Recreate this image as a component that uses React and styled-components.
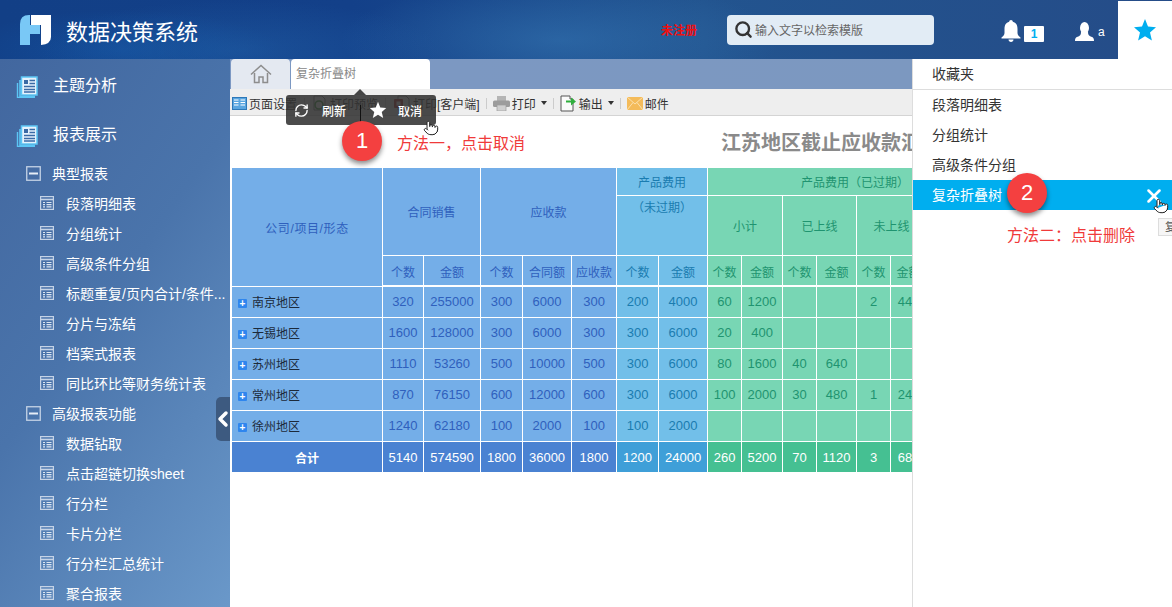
import React from 'react';
import styled, { createGlobalStyle } from 'styled-components';
import { ChevronLeft, Pointer, RefreshCw, Search, X } from 'lucide-react';

const FONT = `"Liberation Sans", "Noto Sans CJK SC", sans-serif`;

const GlobalStyle = createGlobalStyle`
  html, body { margin: 0; padding: 0; height: 100%; overflow: hidden; }
  body { font-family: ${FONT}; background: #fff; }
  #root { height: 100%; }
`;

const Page = styled.div`
  position: relative;
  width: 1172px;
  height: 607px;
  overflow: hidden;
  display: flex;
  flex-direction: column;
`;

const Header = styled.header`
  height: 59px;
  flex: none;
  display: flex;
  align-items: center;
  padding-left: 20px;
  background:
    radial-gradient(ellipse 220px 60px at 560px 40px, rgba(60, 130, 190, .45), transparent),
    radial-gradient(ellipse 200px 50px at 240px 50px, rgba(40, 110, 180, .35), transparent),
    radial-gradient(ellipse 160px 40px at 120px 50px, rgba(20, 90, 170, .5), transparent),
    linear-gradient(90deg, #123f86 0%, #134089 30%, #22548f 60%, #254c88 100%);
`;

const AppTitle = styled.div`
  margin-left: 15px;
  font-size: 22px;
  color: #fff;
  white-space: nowrap;
`;

const Unregistered = styled.div`
  margin-left: 463px;
  width: 66px;
  font-size: 12px;
  font-weight: 700;
  color: #f01010;
`;

const SearchBox = styled.div`
  width: 207px;
  height: 30px;
  box-sizing: border-box;
  padding-left: 7px;
  display: flex;
  align-items: center;
  gap: 2px;
  border-radius: 4px;
  background: #e2ecf5;
  font-size: 12px;
  color: #666;
  svg { color: #333; flex: none; }
`;

const BellWrap = styled.div`
  margin-left: 67px;
  margin-top: 3px;
  display: flex;
  align-items: flex-end;
  gap: 3px;
`;

const BellBadge = styled.span`
  width: 20px;
  height: 16px;
  background: #fff;
  color: #00aeef;
  border-radius: 1px;
  font-size: 12px;
  font-weight: 700;
  line-height: 16px;
  text-align: center;
`;

const UserWrap = styled.div`
  margin-left: 31px;
  margin-top: 3px;
  display: flex;
  align-items: flex-end;
  gap: 4px;
  color: #fff;
  font-size: 12px;
  line-height: 16px;
  span { margin-bottom: 1px; }
`;

const StarTab = styled.div`
  margin-left: auto;
  width: 54px;
  height: 58px;
  align-self: flex-end;
  background: #fff;
  display: flex;
  align-items: center;
  justify-content: center;
`;

const Body = styled.div`
  flex: 1;
  min-height: 0;
  display: flex;
`;

const Sidebar = styled.nav`
  position: relative;
  width: 230px;
  flex: none;
  box-sizing: border-box;
  padding-top: 1px;
  color: #fff;
  background: linear-gradient(125deg, #42679f 0%, #4a74ab 45%, #6a98c9 100%);
`;

const TopItem = styled.div`
  height: 49px;
  display: flex;
  align-items: center;
  padding-left: 16px;
  gap: 15px;
  font-size: 16px;
  svg { flex: none; margin-top: 4px; }
  span { margin-top: -2px; }
`;

const GroupRow = styled.div`
  height: 30px;
  display: flex;
  align-items: center;
  padding-left: 26px;
  gap: 11px;
  font-size: 14px;
`;

const LeafRow = styled.div`
  height: 30px;
  display: flex;
  align-items: center;
  padding-left: 40px;
  gap: 12px;
  font-size: 14px;
  white-space: nowrap;
  svg { flex: none; }
`;

const CollapseHandle = styled.div`
  position: absolute;
  right: 0;
  top: 338px;
  width: 14px;
  height: 44px;
  border-radius: 5px 0 0 5px;
  background: #3d5a80;
  color: #fff;
  display: flex;
  align-items: center;
  justify-content: center;
  svg { flex: none; }
`;

const Main = styled.main`
  width: 682px;
  flex: none;
  display: flex;
  flex-direction: column;
  overflow: hidden;
  background: #fff;
`;

const TabStrip = styled.div`
  height: 30px;
  flex: none;
  display: flex;
  align-items: stretch;
  gap: 1px;
  padding-left: 1px;
  background: linear-gradient(90deg, #7c98c3, #7c98c0);
`;

const HomeTab = styled.div`
  width: 59px;
  background: #e4e9f1;
  border-radius: 4px 4px 0 0;
  display: flex;
  align-items: center;
  justify-content: center;
`;

const ActiveTab = styled.div`
  width: 139px;
  box-sizing: border-box;
  padding: 0 5px;
  background: #fff;
  border-radius: 4px 4px 0 0;
  font-size: 12px;
  line-height: 30px;
  color: #888;
`;

const Toolbar = styled.div`
  height: 27px;
  flex: none;
  box-sizing: border-box;
  display: flex;
  align-items: center;
  padding: 2px 0 0 2px;
  background: #eeeeee;
  border-bottom: 1px solid #d4d4d4;
  font-size: 12px;
  color: #333;
  white-space: nowrap;
`;

const ToolItem = styled.div`
  display: flex;
  align-items: center;
  gap: 2px;
  svg { flex: none; }
`;

const ToolSep = styled.i`
  width: 1px;
  height: 11px;
  margin: 0 ${p => p.$gap || 7}px;
  background: #ccc;
`;

const Caret = styled.i`
  width: 0;
  height: 0;
  margin-left: 3px;
  border: 3px solid transparent;
  border-top: 4px solid #333;
  border-bottom: 0;
`;

const ReportTitle = styled.div`
  height: 52px;
  flex: none;
  box-sizing: border-box;
  padding: 14px 0 0 491px;
  font-size: 20px;
  line-height: 26px;
  font-weight: 700;
  color: #8a8a8a;
  white-space: nowrap;
`;

const TableClip = styled.div`
  margin-left: 2px;
  overflow: hidden;
`;

const Report = styled.table`
  table-layout: fixed;
  width: 695px;
  border-collapse: separate;
  border-spacing: 0;
  font-size: 12px;
`;

const palette = {
  blue: { bg: '#74aee8', fg: '#2f60bd', total: '#4a82d2' },
  sky: { bg: '#72bfe9', fg: '#1a7cb0', total: '#3f9fd8' },
  green: { bg: '#78d6b4', fg: '#1f9470', total: '#45c092' },
};

const Cell = styled.td`
  padding: 0 0 2px;
  height: ${p => p.$h || 30}px;
  box-sizing: border-box;
  border-right: 1px solid #fff;
  border-bottom: 1px solid #fff;
  text-align: center;
  white-space: nowrap;
  overflow: hidden;
  background: ${p => palette[p.$tone].bg};
  color: ${p => palette[p.$tone].fg};
  font-size: 13px;
`;

const HeadCell = styled(Cell).attrs({ as: 'th' })`
  padding: 0;
  font-size: 12px;
  font-weight: 400;
`;

const CompanyHead = styled(HeadCell)`
  letter-spacing: .6px;
`;

const TopAlignedHead = styled(HeadCell)`
  vertical-align: top;
  padding-top: 2px;
`;

const LeftAlignedHead = styled(HeadCell)`
  text-align: left;
  padding-left: 93px;
`;

const SubHead = styled(HeadCell)`
  padding-top: 1px;
  border-bottom-width: 2px;
`;

const NameCell = styled(Cell)`
  text-align: left;
  padding-left: 6px;
  color: #1c2a3a;
  font-size: 12px;
`;

const TotalCell = styled(Cell)`
  padding: 0;
  background: ${p => palette[p.$tone].total};
  color: #fff;
  font-size: ${p => (p.$label ? 12 : 13)}px;
  font-weight: ${p => (p.$label ? 700 : 400)};
  border-bottom: 0;
`;

const Expand = styled.i`
  display: inline-block;
  width: 9px;
  height: 9px;
  margin-right: 5px;
  border-radius: 1px;
  background: #2f86ee;
  color: #fff;
  font-style: normal;
  font-size: 10px;
  line-height: 9px;
  text-align: center;
  font-weight: 700;
`;

const FavPanel = styled.aside`
  flex: 1;
  box-sizing: border-box;
  border-left: 1px solid #ddd;
  background: #fff;
  font-size: 14px;
  color: #333;
`;

const FavHead = styled.div`
  height: 31px;
  box-sizing: border-box;
  padding: 5px 0 0 19px;
  line-height: 20px;
  border-bottom: 1px solid #ddd;
`;

const FavRow = styled.div`
  height: 30px;
  box-sizing: border-box;
  display: flex;
  align-items: center;
  justify-content: space-between;
  padding: 0 7px 2px 19px;
  background: ${p => (p.$active ? '#00aeef' : 'transparent')};
  color: ${p => (p.$active ? '#fff' : '#333')};
  svg { margin-top: 4px; }
`;

const Popup = styled.div`
  position: absolute;
  left: 286px;
  top: 95px;
  width: 150px;
  height: 30px;
  box-sizing: border-box;
  padding-left: 8px;
  display: flex;
  align-items: center;
  border-radius: 3px;
  background: rgba(50, 50, 50, .88);
  color: #fff;
  font-size: 12px;
  font-weight: 500;
  &::before {
    content: '';
    position: absolute;
    left: 68px;
    top: -6px;
    border: 6px solid transparent;
    border-top: 0;
    border-bottom-color: #444;
  }
`;

const PopupAction = styled.div`
  display: flex;
  align-items: center;
  gap: ${p => p.$gap}px;
`;

const PopupDivider = styled.i`
  width: 1px;
  height: 20px;
  margin: 0 8px 0 14px;
  align-self: flex-end;
  background: #111;
`;

const Step = styled.div`
  position: absolute;
  left: ${p => p.$x}px;
  top: ${p => p.$y}px;
  width: 40px;
  height: 40px;
  border-radius: 50%;
  background: #f44040;
  box-shadow: 0 3px 5px rgba(0, 0, 0, .45);
  color: #fff;
  font-size: 22px;
  line-height: 40px;
  text-align: center;
`;

const Note = styled.div`
  position: absolute;
  left: ${p => p.$x}px;
  top: ${p => p.$y}px;
  font-size: 16px;
  line-height: 20px;
  color: #f03a3a;
  white-space: nowrap;
`;

const Hand = styled.div`
  position: absolute;
  left: ${p => p.$x}px;
  top: ${p => p.$y}px;
  width: 16px;
  height: 18px;
  svg { fill: #fff; color: #222; display: block; }
`;

const TipStub = styled.div`
  position: absolute;
  left: 1158px;
  top: 218px;
  width: 30px;
  height: 18px;
  box-sizing: border-box;
  padding-left: 6px;
  border: 1px solid #ddd;
  background: #f6f6f6;
  font-size: 11px;
  line-height: 16px;
  color: #555;
`;

// logo, two interlocked pieces
const Logo = () => (
  <svg width="31" height="30" viewBox="0 0 31 30">
    <path d="M0 9Q0 0 9 0H10V10H20V19H10V30H0Z" fill="#79c8f6" />
    <path d="M11 0H31V22Q31 29 21 30V10H11Z" fill="#fff" />
  </svg>
);

const Star = ({ size, color }) => (
  <svg width={size} height={size} viewBox="0 0 24 24">
    <polygon points="12,1 15,8.6 23,9.3 17,14.6 18.9,22.5 12,18.3 5.1,22.5 7,14.6 1,9.3 9,8.6" fill={color} />
  </svg>
);

const BellIcon = () => (
  <svg width="20" height="22" viewBox="0 0 20 22" fill="#fff">
    <path d="M10 0C11 0 11.8.8 11.8 1.8C15.2 2.6 16.5 5.5 16.5 9V13C16.5 15 17.8 16.2 19.5 17.5V18.5H.5V17.5C2.2 16.2 3.5 15 3.5 13V9C3.5 5.5 4.8 2.6 8.2 1.8C8.2.8 9 0 10 0Z" />
    <path d="M7.5 19.5H12.5C12.5 21 11.4 22 10 22S7.5 21 7.5 19.5Z" />
  </svg>
);

const UserIcon = () => (
  <svg width="19" height="19" viewBox="0 0 19 19" fill="#fff">
    <ellipse cx="9.5" cy="6" rx="4.5" ry="6" />
    <path d="M6 10C6 13 5 14 2 15C.5 15.6 0 17 0 19H19C19 17 18.5 15.6 17 15C14 14 13 13 13 10Z" />
  </svg>
);

const NewsIcon = () => (
  <svg width="22" height="22" viewBox="0 0 22 22" fill="none">
    <path d="M4 4V20.5H19" stroke="#5cc6f5" strokeWidth="1.6" />
    <path d="M1.5 7V21.5H19" stroke="#5cc6f5" strokeWidth="1.4" />
    <rect x="5.5" y="1" width="15.5" height="18" fill="#e6f2fc" stroke="#5cc6f5" strokeWidth="1.5" />
    <rect x="8" y="4" width="4" height="4" fill="#3a6aa5" />
    <path d="M13.5 4.5H19M13.5 7.5H19M8 10.5H19M8 13.5H19M8 16H19" stroke="#3a6aa5" strokeWidth="1.3" />
  </svg>
);

const MinusBox = () => (
  <svg width="15" height="15" viewBox="0 0 15 15" fill="none">
    <rect x=".75" y=".75" width="13.5" height="13.5" stroke="#c5d3e6" strokeWidth="1.3" />
    <path d="M3 7.5H12" stroke="#e6edf6" strokeWidth="2" />
  </svg>
);

const TableIcon = () => (
  <svg width="14" height="14" viewBox="0 0 14 14" fill="none">
    <rect x=".6" y=".6" width="12.8" height="12.8" stroke="#c5d3e6" strokeWidth="1.2" />
    <path d="M1 3.5H13" stroke="#c5d3e6" strokeWidth="1.6" />
    <path d="M3 6.5H5M6.5 6.5H11.5M3 8.7H5M6.5 8.7H11.5M3 10.9H5M6.5 10.9H11.5" stroke="#dbe5f2" strokeWidth="1.2" />
  </svg>
);

const HomeIcon = () => (
  <svg width="22" height="20" viewBox="0 0 22 20" fill="none" stroke="#8d8d8d" strokeWidth="1.5">
    <path d="M1 10.5L11 1.5L21 10.5" />
    <path d="M4.5 9V18.5H9V13H13V18.5H17.5V9" />
  </svg>
);

const PageSetupIcon = () => (
  <svg width="15" height="13" viewBox="0 0 15 13">
    <rect x=".5" y=".5" width="14" height="12" fill="#5aa6e0" stroke="#2e78b8" />
    <path d="M2 3H6.5M2 5.5H6.5M2 8H6.5M8.5 3H13M8.5 5.5H13M8.5 8H13" stroke="#fff" />
  </svg>
);

const PreviewIcon = () => (
  <svg width="16" height="16" viewBox="0 0 16 16" fill="none">
    <path d="M2 1H10L13 4V15H2Z" fill="#fafafa" stroke="#777" />
    <circle cx="7" cy="10" r="4" stroke="#3c9a3c" strokeWidth="1.6" />
  </svg>
);

const ClientPrintIcon = () => (
  <svg width="18" height="16" viewBox="0 0 18 16" fill="none">
    <path d="M5 1H13L16 4V15H5Z" fill="#fafafa" stroke="#777" />
    <rect x="1" y="4" width="9" height="9" rx="1" fill="#b32b2b" />
    <rect x="3.5" y="6.5" width="4" height="4" fill="#fff" />
  </svg>
);

const PrinterIcon = () => (
  <svg width="17" height="15" viewBox="0 0 17 15">
    <rect x="4" y="0" width="9" height="5" fill="#b5b5b5" />
    <rect x="0" y="4.5" width="17" height="6.5" rx="1.5" fill="#9c9c9c" />
    <rect x="4" y="9" width="9" height="6" fill="#cfcfcf" stroke="#9c9c9c" strokeWidth=".7" />
  </svg>
);

const ExportIcon = () => (
  <svg width="17" height="17" viewBox="0 0 17 17" fill="none">
    <path d="M1 1H10V4H13V16H1Z" fill="#fafafa" stroke="#555" />
    <path d="M6 5.5H11V2.5L16 6.5L11 10.5V7.5H6Z" fill="#2fae3c" />
  </svg>
);

const MailIcon = () => (
  <svg width="16" height="13" viewBox="0 0 16 13">
    <rect width="16" height="13" rx="1" fill="#f4bb5a" />
    <path d="M0 0L8 7L16 0M0 13L6 5.5M16 13L10 5.5" stroke="#fbe0ad" fill="none" />
  </svg>
);

const LEAVES_A = ['段落明细表', '分组统计', '高级条件分组', '标题重复/页内合计/条件...', '分片与冻结', '档案式报表', '同比环比等财务统计表'];
const LEAVES_B = ['数据钻取', '点击超链切换sheet', '行分栏', '卡片分栏', '行分栏汇总统计', '聚合报表'];

const COLS = [151, 41, 57, 42, 49, 45, 42, 49, 34, 41, 34, 40, 34, 36];
const TONES = ['blue', 'blue', 'blue', 'blue', 'blue', 'sky', 'sky', 'green', 'green', 'green', 'green', 'green', 'green'];
const SUBHEADS = ['个数', '金额', '个数', '合同额', '应收款', '个数', '金额', '个数', '金额', '个数', '金额', '个数', '金额'];

const ROWS = [
  ['南京地区', '320', '255000', '300', '6000', '300', '200', '4000', '60', '1200', '', '', '2', '440'],
  ['无锡地区', '1600', '128000', '300', '6000', '300', '300', '6000', '20', '400', '', '', '', ''],
  ['苏州地区', '1110', '53260', '500', '10000', '500', '300', '6000', '80', '1600', '40', '640', '', ''],
  ['常州地区', '870', '76150', '600', '12000', '600', '300', '6000', '100', '2000', '30', '480', '1', '240'],
  ['徐州地区', '1240', '62180', '100', '2000', '100', '100', '2000', '', '', '', '', '', ''],
];
const TOTAL = ['5140', '574590', '1800', '36000', '1800', '1200', '24000', '260', '5200', '70', '1120', '3', '680'];

export default function App() {
  return (
    <Page>
      <GlobalStyle />
      <Header>
        <Logo />
        <AppTitle>数据决策系统</AppTitle>
        <Unregistered>未注册</Unregistered>
        <SearchBox>
          <Search size={19} strokeWidth={3} />
          输入文字以检索模版
        </SearchBox>
        <BellWrap>
          <BellIcon />
          <BellBadge>1</BellBadge>
        </BellWrap>
        <UserWrap>
          <UserIcon />
          <span>a</span>
        </UserWrap>
        <StarTab>
          <Star size={24} color="#00aeef" />
        </StarTab>
      </Header>
      <Body>
        <Sidebar>
          <TopItem><NewsIcon /><span>主题分析</span></TopItem>
          <TopItem><NewsIcon /><span>报表展示</span></TopItem>
          <GroupRow><MinusBox />典型报表</GroupRow>
          {LEAVES_A.map(t => <LeafRow key={t}><TableIcon />{t}</LeafRow>)}
          <GroupRow><MinusBox />高级报表功能</GroupRow>
          {LEAVES_B.map(t => <LeafRow key={t}><TableIcon />{t}</LeafRow>)}
          <CollapseHandle><ChevronLeft size={24} strokeWidth={3.5} /></CollapseHandle>
        </Sidebar>
        <Main>
          <TabStrip>
            <HomeTab><HomeIcon /></HomeTab>
            <ActiveTab>复杂折叠树</ActiveTab>
          </TabStrip>
          <Toolbar>
            <ToolItem><PageSetupIcon />页面设置</ToolItem>
            <ToolSep />
            <ToolItem><PreviewIcon />打印预览</ToolItem>
            <ToolSep />
            <ToolItem><ClientPrintIcon />打印[客户端]</ToolItem>
            <ToolSep $gap={6} />
            <ToolItem><PrinterIcon />打印<Caret /></ToolItem>
            <ToolSep $gap={6} />
            <ToolItem><ExportIcon />输出<Caret /></ToolItem>
            <ToolSep $gap={6} />
            <ToolItem><MailIcon />邮件</ToolItem>
          </Toolbar>
          <ReportTitle>江苏地区截止应收款汇总表</ReportTitle>
          <TableClip>
            <Report>
              <colgroup>
                {COLS.map((w, i) => <col key={i} style={{ width: w }} />)}
              </colgroup>
              <thead>
                <tr>
                  <CompanyHead $tone="blue" rowSpan={3}>公司/项目/形态</CompanyHead>
                  <HeadCell $tone="blue" colSpan={2} rowSpan={2}>合同销售</HeadCell>
                  <HeadCell $tone="blue" colSpan={3} rowSpan={2}>应收款</HeadCell>
                  <HeadCell $tone="sky" colSpan={2} $h={28}>产品费用</HeadCell>
                  <LeftAlignedHead $tone="green" colSpan={6} $h={28}>{'产品费用\uFF08已过期\uFF09'}</LeftAlignedHead>
                </tr>
                <tr>
                  <TopAlignedHead $tone="sky" colSpan={2} $h={60}>{'\uFF08未过期\uFF09'}</TopAlignedHead>
                  <HeadCell $tone="green" colSpan={2} $h={60}>小计</HeadCell>
                  <HeadCell $tone="green" colSpan={2} $h={60}>已上线</HeadCell>
                  <HeadCell $tone="green" colSpan={2} $h={60}>未上线</HeadCell>
                </tr>
                <tr>
                  {SUBHEADS.map((t, i) => <SubHead key={i} $tone={TONES[i]} $h={31}>{t}</SubHead>)}
                </tr>
              </thead>
              <tbody>
                {ROWS.map(row => (
                  <tr key={row[0]}>
                    <NameCell $tone="blue" $h={31}><Expand>+</Expand>{row[0]}</NameCell>
                    {row.slice(1).map((v, i) => <Cell key={i} $tone={TONES[i]} $h={31}>{v}</Cell>)}
                  </tr>
                ))}
                <tr>
                  <TotalCell $tone="blue" $label $h={30}>合计</TotalCell>
                  {TOTAL.map((v, i) => <TotalCell key={i} $tone={TONES[i]} $h={30}>{v}</TotalCell>)}
                </tr>
              </tbody>
            </Report>
          </TableClip>
        </Main>
        <FavPanel>
          <FavHead>收藏夹</FavHead>
          <FavRow>段落明细表</FavRow>
          <FavRow>分组统计</FavRow>
          <FavRow>高级条件分组</FavRow>
          <FavRow $active>复杂折叠树<X size={22} strokeWidth={2.8} /></FavRow>
        </FavPanel>
      </Body>

      <Popup>
        <PopupAction $gap={13}><RefreshCw size={15} strokeWidth={2.2} />刷新</PopupAction>
        <PopupDivider />
        <PopupAction $gap={11}><Star size={18} color="#fff" />取消</PopupAction>
      </Popup>
      <Step $x={342} $y={121}>1</Step>
      <Note $x={397} $y={134}>{'方法一\uFF0C点击取消'}</Note>
      <Hand $x={423} $y={120}><Pointer size={16} strokeWidth={1.5} /></Hand>
      <Step $x={1007} $y={173}>2</Step>
      <Note $x={1007} $y={226}>{'方法二\uFF1A点击删除'}</Note>
      <TipStub>复</TipStub>
      <Hand $x={1153} $y={198}><Pointer size={16} strokeWidth={1.5} /></Hand>
    </Page>
  );
}
